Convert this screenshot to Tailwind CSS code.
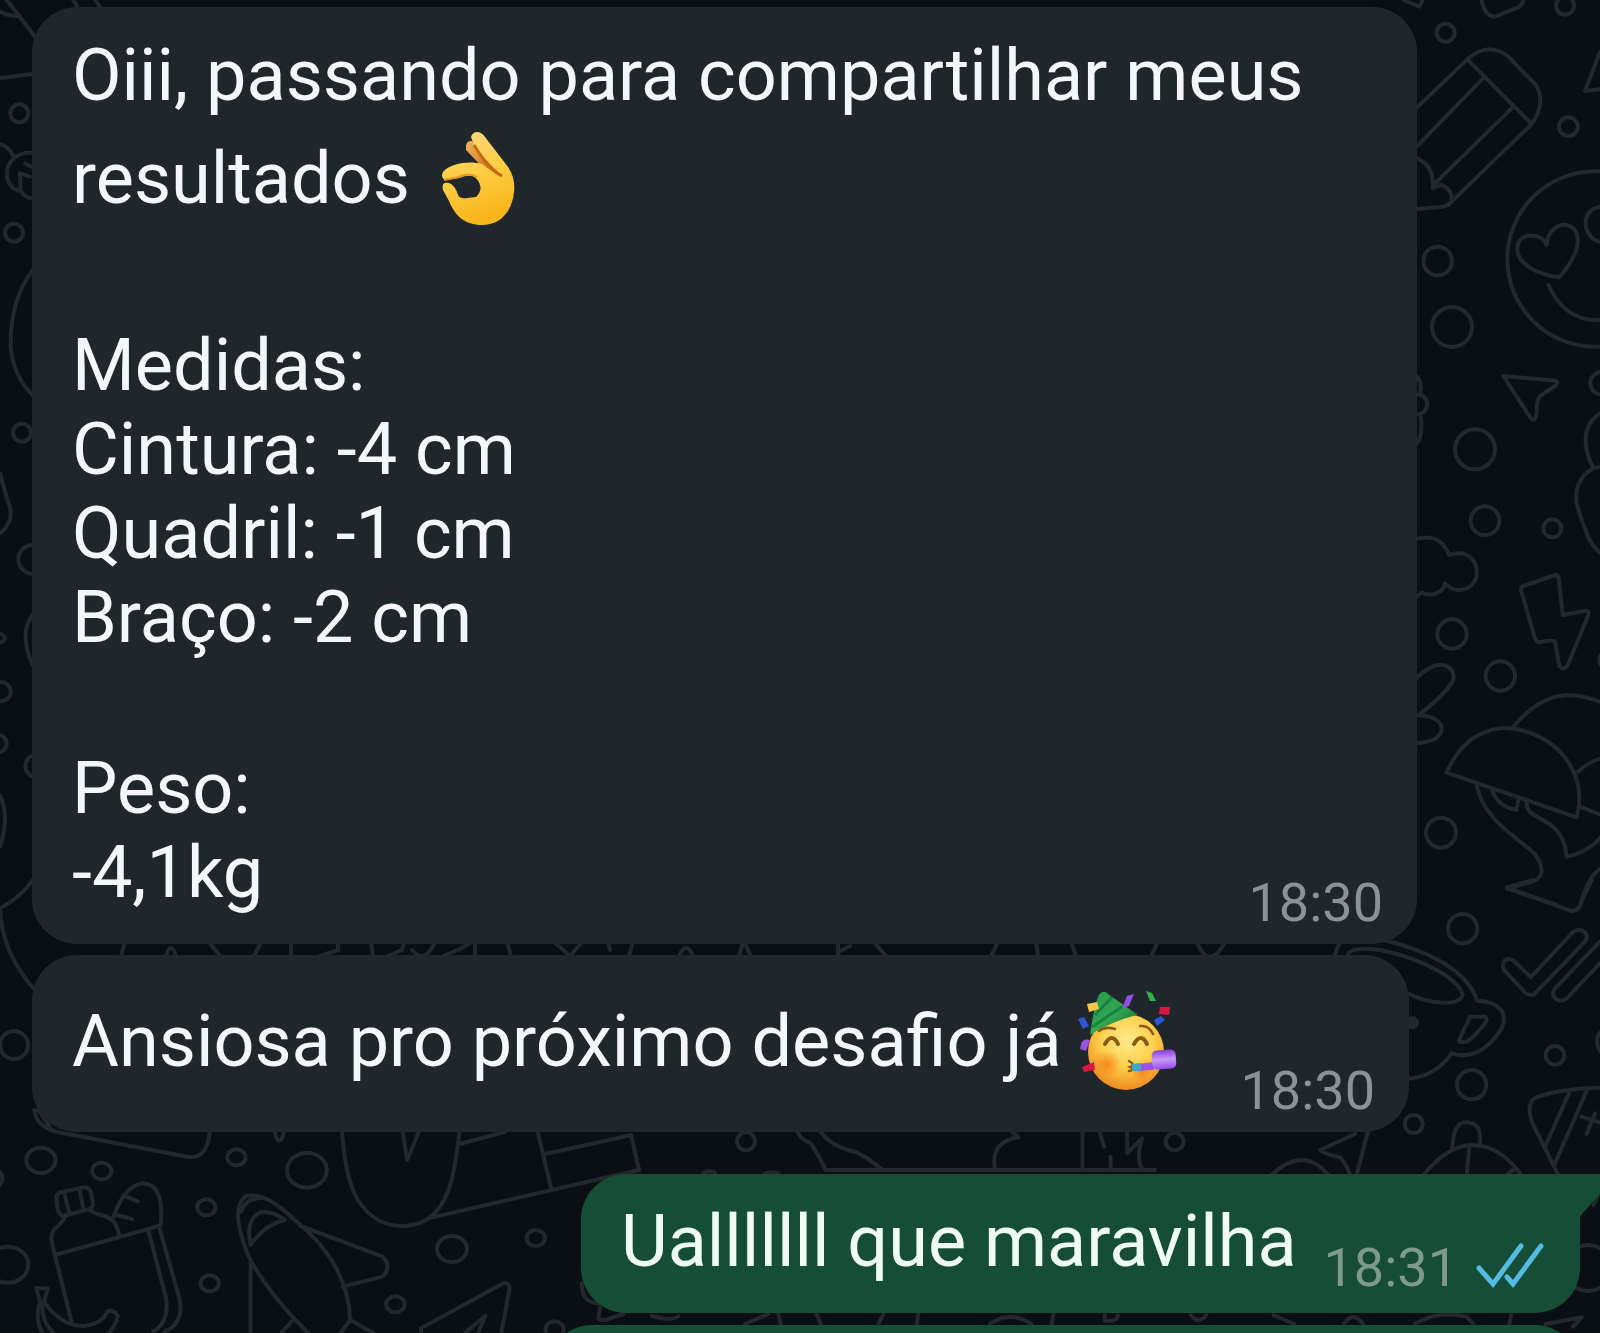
<!DOCTYPE html>
<html lang="pt-BR">
<head>
<meta charset="utf-8">
<meta name="viewport" content="width=device-width, initial-scale=1">
<title>Conversa</title>
<script src="https://cdn.jsdelivr.net/npm/@tailwindcss/browser@4"></script>
</head>
<body class="bg-[#0a0f13] font-['Roboto','Noto_Sans',sans-serif]">
<main class="relative isolate flex h-screen flex-col overflow-hidden pl-8 pr-5 pt-[7px] text-[72px] leading-[84px] text-[#f3f7fa]">

  <!-- Wallpaper doodles -->
  <svg class="absolute inset-0 -z-10 h-full w-full [&_*]:[vector-effect:non-scaling-stroke]" viewBox="0 0 1600 1333" preserveAspectRatio="xMaxYMin slice" fill="none" stroke="#23282c" stroke-width="4" stroke-linejoin="round" stroke-linecap="round" aria-hidden="true">
    <!-- top right: pencil, smiley, paper plane -->
    <g transform="translate(1380 0) scale(.33333)">
      <path d="M70 0L118 20L128 0M305 0Q315 50 345 50L415 22Q428 14 430 0"/>
      <circle cx="555" cy="17" r="27"/><circle cx="197" cy="98" r="27"/><circle cx="565" cy="380" r="28"/>
      <path d="M660 155L615 273L660 268"/>
      <path d="M105 328L262 178Q325 122 385 170L465 252Q502 305 455 372L215 605Q200 622 170 622L105 628M262 178L455 372M105 445L308 236M398 322L165 550M105 472Q165 495 158 565Q190 540 212 580Q220 600 205 615"/>
      <circle cx="645" cy="777" r="263"/>
      <path d="M500 735C490 700 415 690 412 745C410 795 480 825 538 832C570 795 610 735 586 692C560 655 500 680 500 735ZM660 620C600 630 605 710 660 726M505 855Q555 965 660 960"/>
      <circle cx="173" cy="783" r="43"/><circle cx="216" cy="981" r="60"/><circle cx="285" cy="1348" r="60"/>
      <path d="M370 1128L525 1142Q540 1148 525 1158L480 1188Q470 1200 470 1235Q466 1275 448 1248Z"/>
      <circle cx="665" cy="1150" r="34"/><circle cx="112" cy="1213" r="30"/>
      <path d="M112 1130Q128 1150 120 1180M112 1330Q130 1300 122 1250"/>
    </g>
    <!-- right: clouds, bolt, mushrooms -->
    <g transform="translate(1380 420) scale(.33333)">
      <circle cx="315" cy="302" r="43"/><circle cx="517" cy="325" r="27"/><circle cx="216" cy="642" r="44"/><circle cx="361" cy="768" r="44"/><circle cx="183" cy="1238" r="45"/><circle cx="685" cy="720" r="27"/>
      <path d="M660 -20Q585 30 640 145Q580 180 590 250Q600 290 620 340Q635 380 665 402M640 145L665 140"/>
      <path d="M105 358Q180 335 207 405C265 385 290 425 290 455C290 505 235 530 195 490C190 520 155 530 125 518L105 532"/>
      <path d="M425 500L525 465Q535 463 537 480L548 585L618 572Q630 572 624 588L562 738Q550 752 538 738L525 665Q520 658 475 667Q468 665 462 645L423 510Z"/>
      <path d="M105 780Q150 730 190 735Q225 745 220 780Q200 820 115 886Q185 890 185 930Q180 965 105 970"/>
      <path d="M200 1058C260 920 370 910 440 935C560 975 620 1080 590 1192Z"/>
      <path d="M400 920Q480 825 570 825Q620 828 665 848M595 1055Q625 1025 665 1015M605 1162L665 1185"/>
      <path d="M290 1095C310 1200 410 1250 465 1302Q515 1375 440 1390L380 1405L530 1455M440 1145C435 1210 550 1180 560 1310Q620 1300 665 1250M335 1105Q350 1160 410 1170L415 1140M605 1440Q630 1360 665 1345"/>
    </g>
    <!-- right lower: tea cup, ticks, hat -->
    <g transform="translate(1300 880) scale(.33333)">
      <path d="M620 22L700 0M620 22L810 92Q828 96 838 80L875 0"/>
      <circle cx="488" cy="146" r="44"/><circle cx="765" cy="526" r="28"/><circle cx="515" cy="614" r="44"/><circle cx="341" cy="732" r="27"/><circle cx="935" cy="485" r="44"/>
      <path d="M615 240Q630 232 642 243L692 292L820 155Q845 140 860 165Q862 180 850 190L705 340Q692 350 678 340L612 270Q605 255 615 240ZM900 185L765 325Q752 345 770 358Q785 368 800 355L900 250"/>
      <path d="M250 180C380 210 500 270 532 362C600 365 625 400 605 445C570 500 520 540 455 520Q405 590 325 596M145 220Q160 200 240 210C370 235 480 300 488 345Q480 370 430 368Q370 365 320 338M510 410L555 410Q565 418 555 430Q520 475 500 485Q470 490 480 475ZM105 222L118 190"/>
      <circle cx="337" cy="428" r="14" fill="#23282c"/>
      <path d="M370 885Q440 800 510 795Q600 795 660 880M457 805Q460 725 500 727Q550 730 538 795M508 800L500 885M620 885L645 865"/>
      <path d="M775 885L700 735Q670 660 720 648Q790 625 900 623M808 638L735 800M860 632L765 850M845 710L900 728M885 700L860 762"/>
      <path d="M165 762L60 810Q60 818 120 832Q135 845 150 885M205 750L170 885"/>
      <path d="M-85 885Q10 795 85 885"/>
      <path d="M900 930Q890 960 880 975"/>
    </g>
    <circle cx="1588" cy="1268" r="23"/>
    <!-- left edge -->
    <g transform="scale(.33333)">
      <path d="M20 0L105 110M0 35Q25 50 60 48M0 235L95 222M220 0L235 25M285 0L300 20M0 432Q25 440 38 465M95 458C0 455 5 570 62 572L60 520L90 530M75 490L95 500M62 572Q75 595 100 595M98 810Q30 900 32 1040Q40 1130 98 1185"/>
      <circle cx="58" cy="340" r="27"/><circle cx="42" cy="698" r="27"/><circle cx="66" cy="1298" r="27"/>
      <path d="M0 1420L22 1500Q50 1560 0 1600"/>
      <circle cx="98" cy="1678" r="43"/><circle cx="4" cy="2075" r="28"/><circle cx="-6" cy="2231" r="26"/><circle cx="110" cy="2298" r="34"/>
      <path d="M98 1845Q55 1900 98 1995M0 1900Q30 1915 0 1928M0 2385Q30 2450 0 2540M0 2725Q65 2690 98 2640M0 2725Q5 2860 105 2970"/>
    </g>
    <circle cx="14" cy="1045" r="14"/>
    <!-- slits between the bubbles -->
    <path d="M121 956L125 942M166 956Q171 940 176 956M209 942L220 956M254 956L261 942M291 942V956M320 956L338 950V942M371 942L373 956M388 956L402 950L404 943M412 950Q425 965 435 942M443 956L458 950L472 942M475 942V956M507 942L511 956M554 942L570 956L582 942M608 942L610 950M633 942L629 956M679 956Q686 940 693 956M743 942L739 956M744 942L751 956M838 956V942M838 952L850 946M874 942L886 956M998 942L991 956M1036 942L1038 956M1071 942L1076 956M1158 942L1151 956M1197 942Q1209 972 1225 942"/>
    <!-- lower left: bottle, rocket, banana -->
    <g transform="translate(0 1110) scale(.3827 .33333)">
      <path d="M90 0Q95 55 160 68L490 140Q540 150 548 68M100 0L130 50M718 65Q722 92 730 92Q738 90 742 65"/>
      <circle cx="107" cy="151" r="38"/><circle cx="266" cy="183" r="25"/><circle cx="618" cy="142" r="24"/><circle cx="802" cy="181" r="52"/><circle cx="539" cy="292" r="24"/><circle cx="548" cy="520" r="24"/><circle cx="20" cy="464" r="54"/><circle cx="1181" cy="417" r="39"/><circle cx="1400" cy="384" r="24"/><circle cx="1033" cy="583" r="24"/><circle cx="1449" cy="658" r="24"/><circle cx="-24" cy="205" r="30"/>
      <path d="M147 260Q150 248 165 245L220 232Q238 232 240 260L243 280Q242 295 230 298L165 318Q155 315 150 295ZM168 250L182 312M208 240L218 298M170 320Q165 335 140 360Q130 380 138 410L187 635M232 298Q245 312 275 318Q305 330 312 378M147 434L415 348L470 570Q480 640 430 665M388 362L435 570Q440 640 400 665M295 325Q325 225 375 220Q430 225 420 345M330 260L360 274M305 315L345 327"/>
      <path d="M95 535H125L115 575Q160 650 220 648Q270 640 280 605Q295 595 308 618Q300 650 285 669M95 535L105 575Q90 620 110 669M110 585Q110 640 140 669"/>
      <path d="M890 669L915 630Q910 460 770 330Q690 240 640 260Q600 300 650 440Q700 550 805 669M630 305Q640 265 685 264M655 405Q640 330 680 307Q710 300 745 330Q690 345 655 405ZM785 348L1000 440Q1025 470 1000 500L895 530M655 450V669M765 630L735 669M915 630L975 669"/>
      <path d="M893 50Q900 200 935 270Q980 350 1055 348Q1150 345 1180 210Q1195 140 1202 50M1050 50L1064 150L1100 50M1200 102L1320 66M1130 322L1670 180L1650 80M1402 50L1440 235M1425 132L1650 75"/>
      <path d="M1100 669V655L1315 520Q1335 515 1330 545L1310 669M1215 669L1268 618L1250 669M1520 520Q1520 580 1565 580"/>
    </g>
    <!-- strip above and below the green bubble -->
    <g transform="translate(560 1100) scale(.33333)">
      <circle cx="558" cy="124" r="27"/>
      <path d="M708 85Q720 120 750 128Q765 145 797 210H1785M775 85Q810 140 885 155Q920 170 965 208M1350 90L1375 112Q1290 125 1305 208M430 218Q450 210 465 218M615 220Q635 214 655 220"/>
      <path d="M120 620L115 655Q125 665 150 655L190 642M275 648Q340 665 355 648M555 672L625 642M655 642L662 672M770 642L782 672M970 642L955 672M1075 642L1070 672M1290 672Q1350 630 1415 672M1480 642L1475 672"/>
    </g>
    <g transform="translate(1060 1100) scale(.34435 .33333)">
      <circle cx="333" cy="125" r="26"/>
      <path d="M65 85V210M112 85L128 140M147 170V210M195 85V160L238 115M238 115Q220 175 240 210M130 645V662H150Q168 660 168 645M380 645Q400 675 425 645M620 645L680 672M825 672Q850 630 880 672M1030 672Q1100 630 1180 650L1200 672M1310 645L1305 672M1410 672L1515 652L1490 680"/>
    </g>
  </svg>

  <article class="w-full max-w-[1385px] rounded-[45px] bg-[#20272a] pb-[9px] pl-10 pr-[34px] pt-[27px]">
    <p>Oiii, passando para compartilhar meus resultados
      <svg class="-mb-[23px] ml-3 inline-block h-[108px] w-[84px] align-baseline" viewBox="0 0 84 108" role="img" aria-label="ok">
        <defs>
          <linearGradient id="hand" x1="0" y1="0" x2=".25" y2="1"><stop offset="0" stop-color="#ffd684"/><stop offset=".5" stop-color="#fdcf45"/><stop offset="1" stop-color="#f9b51c"/></linearGradient>
          <linearGradient id="finger" x1="0" y1="0" x2="1" y2="1"><stop offset="0" stop-color="#f4b65a"/><stop offset="1" stop-color="#b4510c"/></linearGradient>
        </defs>
        <path d="M31 23Q25 23 26 32L47 54L65 61L45 26Z" fill="url(#finger)"/>
        <path d="M31 19C33 12 41 13 45 19L65 45Q76 58 74 74C72 95 59 107 42 107C25 107 15 98 9 83L3 72Q1 63 9 65Q15 67 18 77Q20 81 27 80L36 79Q42 73 40 67Q38 60 32 58Q26 57 19 60L6 62Q0 60 3 54C12 44 31 43 42 46Q53 55 62 58Q46 43 34 27Z" fill="url(#hand)"/>
        <path d="M34 27Q48 51 62 58" fill="none" stroke="#c66a12" stroke-width="3"/>
        <path d="M4 62L18 59Q29 54 37 59" fill="none" stroke="#e79a25" stroke-width="2"/>
      </svg></p>
    <div class="mt-[103px]">
      <h2>Medidas:</h2>
      <ul>
        <li>Cintura: -4 cm</li>
        <li>Quadril: -1 cm</li>
        <li>Braço: -2 cm</li>
      </ul>
    </div>
    <div class="mt-[87px] flex items-end justify-between">
      <div class="mb-5">
        <h2>Peso:</h2>
        <p>-4,1kg</p>
      </div>
      <time class="text-[54px] leading-[64px] text-[#8b9195]" datetime="18:30">18:30</time>
    </div>
  </article>

  <article class="mt-[11px] flex w-full max-w-[1377px] items-end justify-between rounded-[45px] bg-[#20272a] pb-[9px] pl-10 pr-[34px] pt-7">
    <p class="mb-[39px]">Ansiosa pro próximo desafio já
      <svg class="-mb-[25px] -ml-1.5 inline-block h-[108px] w-[108px] align-baseline" viewBox="0 0 108 108" role="img" aria-label="festa">
        <defs>
          <radialGradient id="face" cx=".52" cy=".35" r=".65"><stop offset="0" stop-color="#ffec8c"/><stop offset=".55" stop-color="#fdcf4b"/><stop offset="1" stop-color="#f08a1d"/></radialGradient>
          <radialGradient id="cheek"><stop offset="0" stop-color="#f47a14" stop-opacity=".8"/><stop offset="1" stop-color="#f47a14" stop-opacity="0"/></radialGradient>
          <linearGradient id="hat" x1="0" y1="0" x2="1" y2="1"><stop offset="0" stop-color="#249b4e"/><stop offset=".5" stop-color="#35a552"/><stop offset="1" stop-color="#096b35"/></linearGradient>
          <linearGradient id="horn" x1="0" y1="0" x2="0" y2="1"><stop offset="0" stop-color="#8b3be0"/><stop offset=".5" stop-color="#c69af5"/><stop offset="1" stop-color="#9a4bea"/></linearGradient>
        </defs>
        <circle cx="52" cy="69" r="38" fill="url(#face)"/>
        <circle cx="33" cy="81" r="14" fill="url(#cheek)"/><circle cx="68" cy="88" r="11" fill="url(#cheek)"/>
        <path d="M16 52Q20 22 25 12Q29 6 34 11L64 32Q40 37 16 52Z" fill="url(#hat)"/>
        <path d="M21 32L38 14M18 44L49 23" stroke="#087038" stroke-width="3" fill="none" opacity=".6"/>
        <g fill="none" stroke="#8c5a10" stroke-linecap="round">
          <path d="M25 48Q31 43 41 46M66 43Q75 42 79 51" stroke-width="2.5"/>
          <path d="M31 61Q38 49 44 61M60 61Q67 49 73 61" stroke-width="4"/>
          <path d="M55 78Q62 82 56 84Q62 87 55 88" stroke-width="2.5"/>
        </g>
        <path d="M58 82L80 79V87L58 88Z" fill="#9b50e6"/><path d="M58 81L67 80V88L58 88Z" fill="#3ca5cb"/>
        <rect x="78" y="67" width="24" height="19" rx="5" fill="url(#horn)" transform="rotate(-4 90 77)"/>
        <path d="M13 21L23 19L25 26L15 29Z" fill="#f5c845"/>
        <path d="M4 36L10 34L15 43L9 46Z" fill="#2c56d4"/>
        <path d="M7 61Q9 55 16 57L12 68L6 66Z" fill="#9953e3"/>
        <path d="M8 84L20 79L21 87L10 89Z" fill="#d81742"/>
        <path d="M53 13L60 11L55 23L48 25Z" fill="#924ee5"/>
        <path d="M72 8L78 10L82 18L76 18Z" fill="#35ae4a"/>
        <path d="M86 24L96 24L95 32L85 31Z" fill="#d81742"/>
        <path d="M80 37L87 33L91 37L83 43Z" fill="#2c56d4"/>
      </svg></p>
    <time class="text-[54px] leading-[64px] text-[#8b9195]" datetime="18:30">18:30</time>
  </article>

  <article class="relative mt-[42px] flex w-full max-w-[999px] items-end justify-between self-end rounded-[45px] rounded-tr-none bg-[#154d37] pb-[13px] pl-10 pr-9 pt-[26px] text-[#effcf6]">
    <svg class="absolute left-full top-0 h-11 w-5" viewBox="0 0 20 44" fill="#154d37" aria-hidden="true"><path d="M-1 0H20V20L3 39Q0 42 0 44H-1Z"/></svg>
    <p class="mb-4">Ualllllll que maravilha</p>
    <div class="flex items-end gap-[18px]">
      <time class="text-[54px] leading-[64px] text-[#7f998e]" datetime="18:31">18:31</time>
      <svg class="mb-3 h-12 w-[68px]" viewBox="0 0 68 48" fill="none" stroke="#54bbe3" stroke-width="5" stroke-linecap="round" role="img" aria-label="Lida"><path d="M3 28L17 44L45 6M31 37L37 44L65 6"/></svg>
    </div>
  </article>

  <div class="mt-3 h-[140px] w-full max-w-[1033px] shrink-0 self-end rounded-[45px] bg-[#154d37]" aria-hidden="true"></div>
</main>
</body>
</html>
